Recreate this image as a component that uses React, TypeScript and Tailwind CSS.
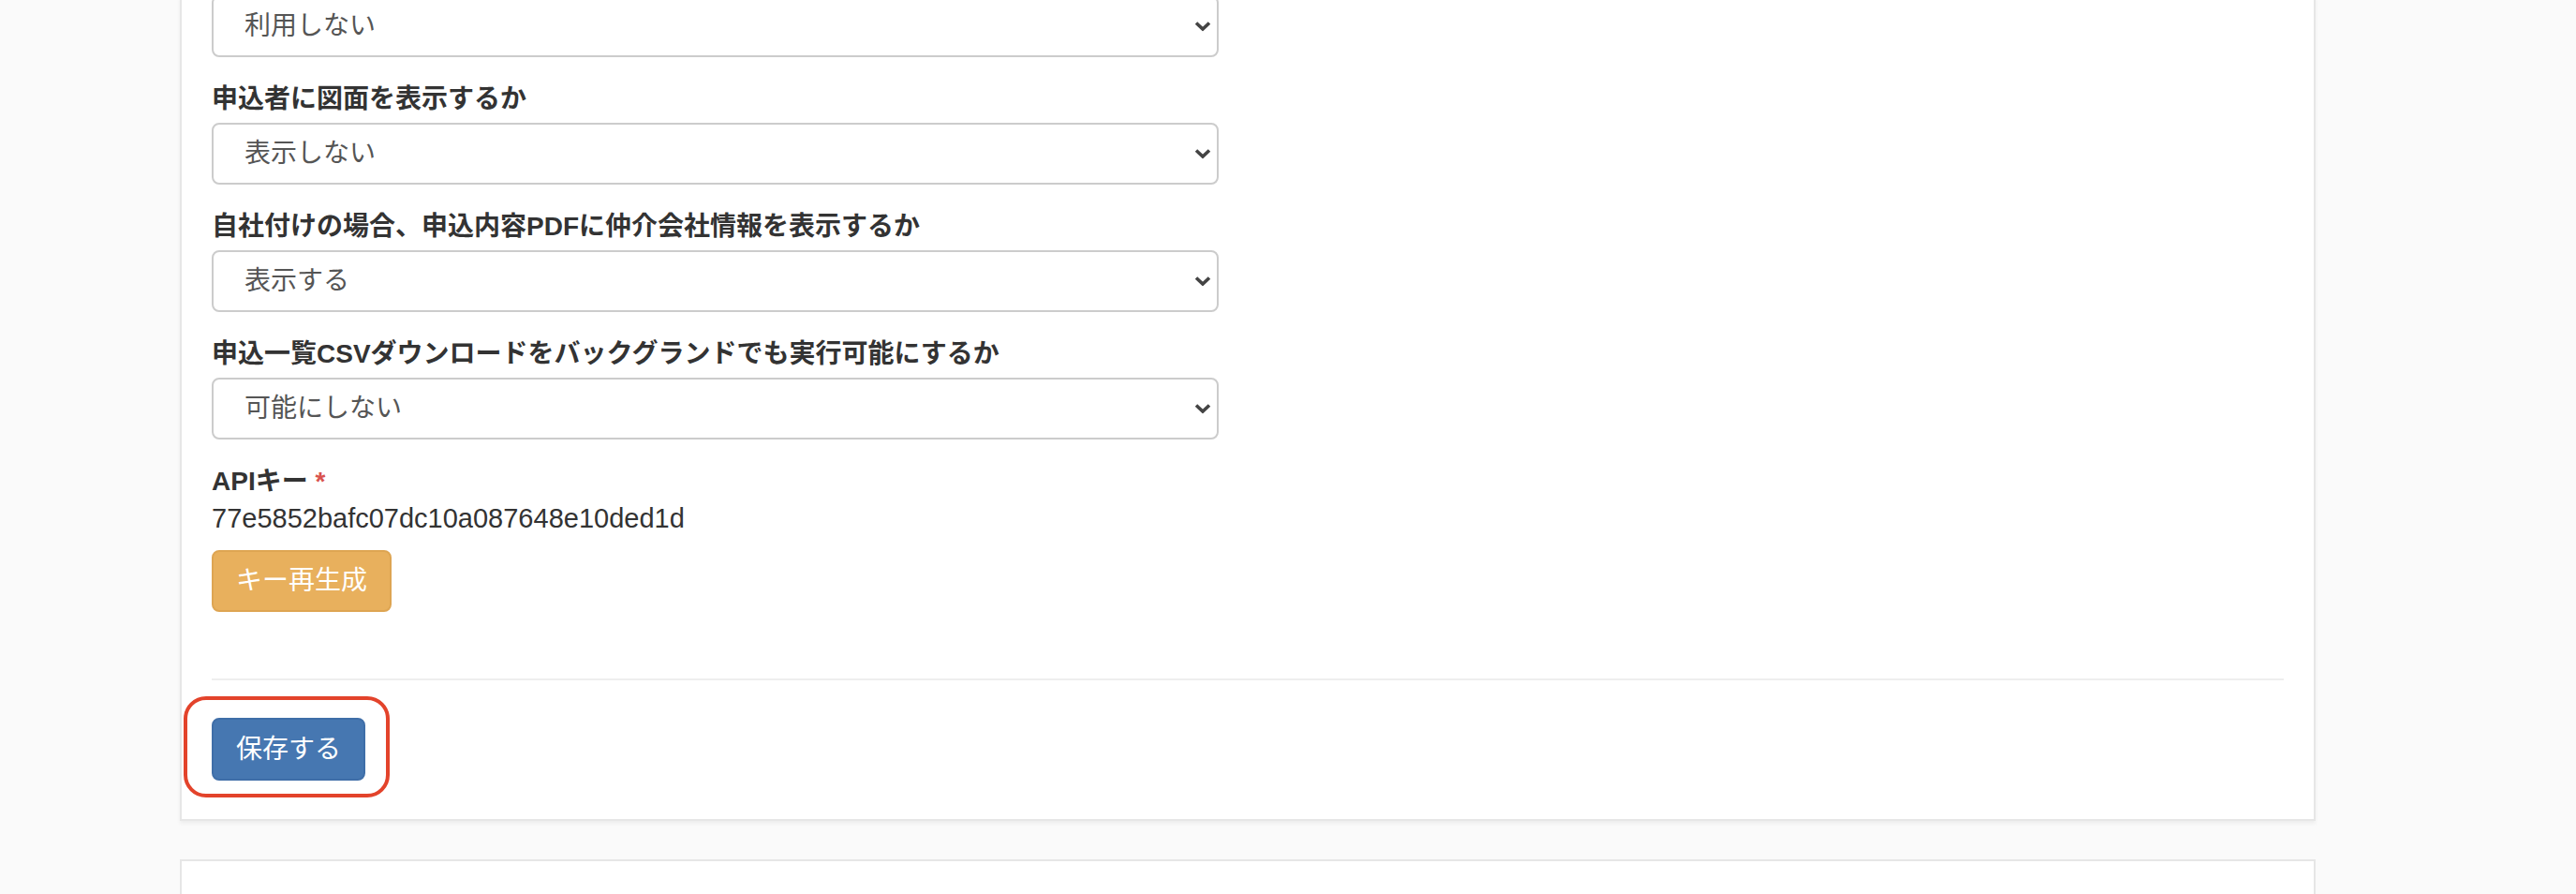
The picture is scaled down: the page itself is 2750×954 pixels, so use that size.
const font = { fontFamily: '"Liberation Sans", "Noto Sans CJK JP", sans-serif' }

const settings = [
  { label: '申込者に図面を表示するか', value: '表示しない' },
  { label: '自社付けの場合、申込内容PDFに仲介会社情報を表示するか', value: '表示する' },
  { label: '申込一覧CSVダウンロードをバックグランドでも実行可能にするか', value: '可能にしない' },
]

function Select({ value, className = '' }: { value: string; className?: string }) {
  return (
    <div className={`relative w-[1075px] ${className}`}>
      <select
        defaultValue={value}
        className="h-[66px] w-full appearance-none rounded-[8px] border-2 border-[#cccccc] bg-white pl-[33px] pr-[50px] text-[28px] text-[#555555] outline-none"
      >
        <option>{value}</option>
      </select>
      <svg
        viewBox="0 0 18 11"
        className="pointer-events-none absolute right-[8px] top-1/2 h-[11px] w-[18px] -translate-y-1/2"
      >
        <polyline points="2,2 9,8.5 16,2" fill="none" stroke="#444444" strokeWidth="3.6" />
      </svg>
    </div>
  )
}

export default function App() {
  return (
    <div className="h-[954px] overflow-hidden bg-[#fafafa] pl-[192px]" style={font}>
      <div className="w-[2280px] border-x-2 border-b-2 border-[#e6e6e6] bg-white px-[32px] pb-[41px] shadow-[0_3px_4px_rgba(0,0,0,0.05)]">
        <Select value="利用しない" className="-mt-[5px]" />

        {settings.map((s) => (
          <div key={s.label} className="mt-[28px]">
            <label className="mb-[8px] block text-[28px] font-bold leading-[34px] text-[#333333]">{s.label}</label>
            <Select value={s.value} />
          </div>
        ))}

        <div className="mt-[28px]">
          <label className="block text-[28px] font-bold leading-[34px] text-[#333333]">
            APIキー <span className="text-[#d9534f]">*</span>
          </label>
          <p className="mt-[2px] text-[29px] leading-[40px] text-[#333333]">77e5852bafc07dc10a087648e10ded1d</p>
          <button className="mt-[14px] h-[66px] rounded-[8px] border-2 border-[#dea552] bg-[#e8b05d] px-[24px] text-[28px] text-white">
            キー再生成
          </button>
        </div>

        <hr className="mt-[71px] border-t-2 border-[#eeeeee]" />

        <div className="relative mt-[40px] w-fit">
          <button className="h-[67px] rounded-[8px] border-2 border-[#3f6ea8] bg-[#4677b1] px-[24px] text-[28px] text-white">
            保存する
          </button>
          <div className="pointer-events-none absolute -bottom-[18px] -left-[30px] -right-[26px] -top-[23px] rounded-[24px] border-[4px] border-[#e3432b]" />
        </div>
      </div>

      <div className="mt-[41px] h-[60px] w-[2280px] border-x-2 border-t-2 border-[#e6e6e6] bg-white" />
    </div>
  )
}
